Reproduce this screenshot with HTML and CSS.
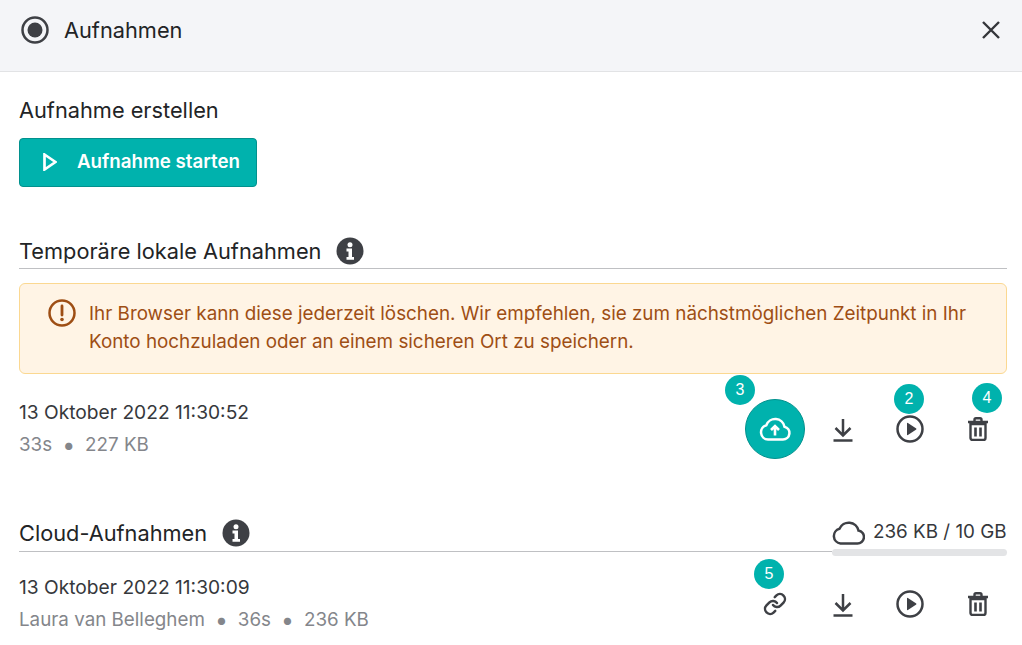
FILE: index.html
```html
<!DOCTYPE html>
<html lang="de">
<head>
<meta charset="utf-8">
<title>Aufnahmen</title>
<link rel="stylesheet" href="styles.css">
</head>
<body>
<svg class="defs" width="0" height="0" aria-hidden="true">
  <defs>
    <symbol id="download" viewBox="0 0 24 25"><path d="M12 2v16.500M4.500 11l7.500 7.500 7.500-7.500" fill="none" stroke="currentColor" stroke-width="2.500"/><path d="M2.500 23.500h19" fill="none" stroke="currentColor" stroke-width="2.500"/></symbol>
    <symbol id="play" viewBox="0 0 28 28"><circle cx="14" cy="14" r="12.500" fill="none" stroke="currentColor" stroke-width="2.500"/><path d="M11 8.500v11a.6.6 0 0 0 .9.5l8-5.200a.9.900 0 0 0 0-1.600l-8-5.200a.6.600 0 0 0-.9.500z" fill="currentColor"/></symbol>
    <symbol id="trash" viewBox="0 0 20 24"><path d="M2.500 7h15v14a2 2 0 0 1-2 2h-11a2 2 0 0 1-2-2zM0 5h20M6.500 4.500V2.800a1.500 1.500 0 0 1 1.500-1.500h4a1.500 1.500 0 0 1 1.500 1.500v1.700" fill="none" stroke="currentColor" stroke-width="2.400"/><path d="M7.500 10.500v9M12.500 10.500v9" fill="none" stroke="currentColor" stroke-width="2.600"/></symbol>
    <symbol id="info" viewBox="0 0 28 28"><circle cx="14" cy="14" r="13.500" fill="currentColor"/><circle cx="14" cy="7.800" r="2.500" fill="#fff"/><path d="M10.500 11.500h5.500V20h2v2.800h-7.500V20h2v-5.500h-2z" fill="#fff"/></symbol>
  </defs>
</svg>
<main class="panel">
  <header class="titlebar">
    <div class="title-group">
      <svg class="rec-icon" viewBox="0 0 28 28"><circle cx="14" cy="14" r="12.500" fill="none" stroke="currentColor" stroke-width="2.500"/><circle cx="14" cy="14" r="7.500" fill="currentColor"/></svg>
      <h1 class="title">Aufnahmen</h1>
    </div>
    <svg class="close-icon" viewBox="0 0 20 20"><path d="M2 2l16 16M18 2L2 18" fill="none" stroke="currentColor" stroke-width="2.400"/></svg>
  </header>

  <div class="content">
    <section class="create">
      <h2 class="heading">Aufnahme erstellen</h2>
      <button class="start-btn">
        <svg class="start-icon" viewBox="0 0 14 18"><path d="M1.500 1.500l11 7.500-11 7.500z" fill="none" stroke="currentColor" stroke-width="2.700"/></svg>
        <span>Aufnahme starten</span>
      </button>
    </section>

    <section class="local">
      <div class="section-head">
        <h2 class="heading">Temporäre lokale Aufnahmen</h2>
        <svg class="info-icon"><use href="#info"/></svg>
      </div>
      <div class="alert">
        <svg class="alert-icon" viewBox="0 0 28 28"><circle cx="14" cy="14" r="12.500" fill="none" stroke="currentColor" stroke-width="2.500"/><path d="M14 7v9" fill="none" stroke="currentColor" stroke-width="2.800" stroke-linecap="round"/><circle cx="14" cy="20.500" r="1.800" fill="currentColor"/></svg>
        <p class="alert-text">Ihr Browser kann diese jederzeit löschen. Wir empfehlen, sie zum nächstmöglichen Zeitpunkt in Ihr Konto hochzuladen oder an einem sicheren Ort zu speichern.</p>
      </div>
      <div class="record record-local">
        <div class="record-info">
          <div class="record-date">13 Oktober 2022 11:30:52</div>
          <div class="record-meta"><span>33s</span><span class="dot">•</span><span>227 KB</span></div>
        </div>
        <div class="actions">
          <button class="action action-primary">
            <span class="badge badge-3">3</span>
            <svg class="cloud-up" viewBox="0 0 32 24"><path d="M9 22.500h15a6.500 6.500 0 0 0 1.500-12.800A9.500 9.500 0 0 0 7.300 8.200 7.300 7.300 0 0 0 9 22.500z" fill="none" stroke="currentColor" stroke-width="2.500"/><path d="M16 18.500v-9M12 13l4-4 4 4" fill="none" stroke="currentColor" stroke-width="2.600"/></svg>
          </button>
          <button class="action"><svg class="icon-download"><use href="#download"/></svg></button>
          <button class="action">
            <span class="badge badge-2">2</span>
            <svg class="icon-play"><use href="#play"/></svg>
          </button>
          <button class="action">
            <span class="badge badge-4">4</span>
            <svg class="icon-trash"><use href="#trash"/></svg>
          </button>
        </div>
      </div>
    </section>

    <section class="cloud">
      <div class="cloud-head">
        <div class="section-head section-head-cloud">
          <h2 class="heading">Cloud-Aufnahmen</h2>
          <svg class="info-icon"><use href="#info"/></svg>
        </div>
        <div class="quota">
          <div class="quota-row">
            <svg class="cloud-outline" viewBox="0 0 33 25"><path d="M8.500 23.500h16.500a6.500 6.500 0 0 0 1.500-12.900A10 10 0 0 0 7.500 8.800 7.500 7.500 0 0 0 8.500 23.500z" fill="none" stroke="currentColor" stroke-width="2.500"/></svg>
            <span class="quota-text">236 KB / 10 GB</span>
          </div>
          <div class="quota-bar"></div>
        </div>
      </div>
      <div class="record record-cloud">
        <div class="record-info">
          <div class="record-date">13 Oktober 2022 11:30:09</div>
          <div class="record-meta"><span>Laura van Belleghem</span><span class="dot">•</span><span>36s</span><span class="dot">•</span><span>236 KB</span></div>
        </div>
        <div class="actions">
          <button class="action">
            <span class="badge badge-5">5</span>
            <svg class="icon-link" viewBox="0 0 24 24"><path d="M10 13a5 5 0 0 0 7.540.54l3-3a5 5 0 0 0-7.070-7.070l-1.720 1.710M14 11a5 5 0 0 0-7.540-.54l-3 3a5 5 0 0 0 7.070 7.070l1.710-1.710" fill="none" stroke="currentColor" stroke-width="2.500" stroke-linecap="round"/></svg>
          </button>
          <button class="action"><svg class="icon-download"><use href="#download"/></svg></button>
          <button class="action"><svg class="icon-play"><use href="#play"/></svg></button>
          <button class="action"><svg class="icon-trash"><use href="#trash"/></svg></button>
        </div>
      </div>
    </section>
  </div>
</main>
</body>
</html>
```
FILE: styles.css
```css
* { box-sizing: border-box; }
html, body { margin: 0; padding: 0; height: 100%; overflow: hidden; }
body { background: #fff; font-family: Inter, "Liberation Sans", sans-serif; color: #222426; }
.defs { position: absolute; }
.titlebar { height: 72px; background: #f4f5f8; border-bottom: 1px solid #e2e3e5; display: flex; align-items: center; justify-content: space-between; padding: 0 21px 11px 21px; }
.title-group { display: flex; align-items: center; gap: 15px; }
.rec-icon { width: 28px; height: 28px; color: #3e4045; display: block; }
.title { margin: 0; font-size: 21.760px; font-weight: 400; line-height: 28px; }
.close-icon { width: 20px; height: 20px; color: #33353a; display: block; }
.content { padding: 25px 15px 0 19px; }
.heading { margin: 0; font-size: 21.760px; font-weight: 400; line-height: 26px; }
.start-btn { margin-top: 15px; width: 238px; height: 49px; background: #00b2ad; border: 1px solid #01918d; border-radius: 4px; color: #fff; display: flex; align-items: center; padding: 0 0 2px 23px; gap: 20px; font: 600 18.720px Inter, "Liberation Sans", sans-serif; }
.start-icon { width: 14px; height: 18px; display: block; }
.local { margin-top: 49px; }
.section-head { display: flex; align-items: center; gap: 15px; height: 33px; border-bottom: 1px solid #bfc0c3; padding-bottom: 3px; }
.info-icon { width: 28px; height: 28px; color: #3e4045; display: block; }
.alert { margin-top: 14px; height: 91px; background: #fff4e5; border: 1px solid #fbd891; border-radius: 6px; display: flex; padding: 15px 20px 0 28px; gap: 13px; color: #9e4e14; }
.alert-icon { width: 28px; height: 28px; flex: none; display: block; }
.alert-text { margin: 1px 0 0; font-size: 18.830px; line-height: 28px; }
.record { display: flex; justify-content: space-between; }
.record-local { margin-top: 25px; height: 120px; }
.record-date { font-size: 19.200px; line-height: 26px; color: #36383c; }
.record-meta { margin-top: 7px; font-size: 18.800px; line-height: 26px; color: #84868b; display: flex; gap: 10px; }
.dot { color: #84868b; font-size: 23px; line-height: 26px; }
.actions { display: flex; gap: 7.500px; margin-right: -0.500px; align-items: flex-start; }
.action { position: relative; width: 60px; height: 60px; padding: 0; border: none; background: none; color: #3e4045; display: flex; align-items: center; justify-content: center; border-radius: 50%; }
.action-primary { background: #00b2ad; color: #fff; border: 1px solid #01918d; }
.badge { position: absolute; width: 30px; height: 30px; border-radius: 50%; background: #00b2ad; color: #fff; font: 400 16px/30px "Liberation Sans", Arial, sans-serif; text-align: center; }
.badge-3 { left: -21px; top: -25px; }
.badge-2 { left: 14px; top: -15px; }
.badge-4 { left: 24.500px; top: -16px; }
.badge-5 { left: 9px; top: -15px; }
.cloud-up { width: 32px; height: 24px; display: block; }
.icon-download { width: 24px; height: 25px; display: block; }
.icon-play { width: 28px; height: 28px; display: block; }
.icon-trash { width: 20px; height: 24px; display: block; }
.icon-link { width: 24px; height: 24px; display: block; }
.cloud-head { display: flex; align-items: flex-end; }
.section-head-cloud { flex: 1; padding-bottom: 4px; }
.quota { width: 175px; }
.quota-row { display: flex; align-items: flex-end; gap: 8px; height: 28px; padding-bottom: 3px; }
.cloud-outline { width: 33px; height: 25px; color: #3e4045; display: block; }
.quota-text { font-size: 18.840px; line-height: 26px; color: #36383c; white-space: nowrap; }
.quota-bar { height: 7px; margin-top: 1px; background: #e3e4e6; border-radius: 4px; margin-bottom: -4px; }
.record-cloud { margin-top: 22px; }
```
